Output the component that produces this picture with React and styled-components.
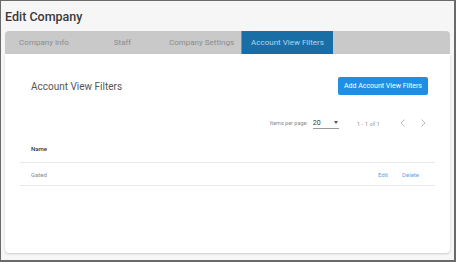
import React from "react";
import styled, { createGlobalStyle } from "styled-components";

const Global = createGlobalStyle`
  html, body { margin: 0; padding: 0; }
  body { font-family: Roboto, "Liberation Sans", sans-serif; background: #f5f5f5; }
  * { box-sizing: border-box; }
`;

const Frame = styled.div`
  width: 456px;
  height: 262px;
  border-style: solid;
  border-color: #6a6a6a;
  border-width: 1px 2px 2px 1px;
  background: #f6f6f6;
  padding: 0 4px 0 4px;
  display: flex;
  flex-direction: column;
  overflow: hidden;
`;

const Title = styled.h1`
  margin: 0;
  height: 30px;
  padding-top: 8px;
  font-size: 12.5px;
  line-height: 16px;
  font-weight: 500;
  color: #3a3a3a;
`;

const TabBar = styled.div`
  display: flex;
  height: 23px;
  background: #c9c9c9;
  border-radius: 4px 4px 0 0;
`;

const Tab = styled.div`
  width: ${(p) => p.w}px;
  display: flex;
  align-items: center;
  justify-content: center;
  font-size: 8px;
  color: ${(p) => (p.active ? "#b9d2e6" : "#8c8c8c")};
  background: ${(p) => (p.active ? "#1a6ea6" : "transparent")};
  border-left: ${(p) => (p.active ? "1px solid #5f98c2" : "none")};
`;

const Card = styled.div`
  height: 199px;
  background: #fff;
  border-radius: 0 0 4px 4px;
  box-shadow: 0 1px 2px rgba(0, 0, 0, 0.18);
  padding: 0 15px;
  display: flex;
  flex-direction: column;
`;

const Header = styled.div`
  display: flex;
  align-items: center;
  justify-content: space-between;
  padding: 23px 7px 0 11px;
`;

const Heading = styled.div`
  font-size: 10px;
  color: #555;
`;

const AddButton = styled.button`
  border: none;
  border-radius: 2px;
  background: #1e8fe6;
  color: #fff;
  font-family: inherit;
  font-size: 7px;
  height: 18px;
  width: 90px;
  padding: 0;
`;

const Pager = styled.div`
  display: flex;
  align-items: center;
  justify-content: flex-end;
  height: 20px;
  margin-top: 18px;
  padding-right: 8px;
  font-size: 5.5px;
  color: #8a8a8a;
`;

const Select = styled.div`
  display: flex;
  align-items: center;
  justify-content: space-between;
  width: 26px;
  height: 11px;
  margin-left: 5px;
  border-bottom: 1px solid #9a9a9a;
  font-size: 7px;
  color: #333;
`;

const Caret = styled.span`
  width: 0;
  height: 0;
  border-left: 2.5px solid transparent;
  border-right: 2.5px solid transparent;
  border-top: 3px solid #555;
  margin-right: 1px;
`;

const Range = styled.span`
  margin-left: 18px;
  font-size: 6px;
  color: #9a9a9a;
`;

const Nav = styled.div`
  display: flex;
  gap: 12px;
  margin-left: 19px;
  svg { display: block; }
`;

const Table = styled.div`
  margin-top: 0;
`;

const Row = styled.div`
  display: flex;
  align-items: center;
  height: ${(p) => (p.head ? 30 : 23)}px;
  padding: ${(p) => (p.head ? "2px 0 0 11px" : "0 16px 0 11px")};
  border-bottom: 1px solid #e8e8e8;
  font-size: 6px;
  color: ${(p) => (p.head ? "#333" : "#8a8a8a")};
  font-weight: ${(p) => (p.head ? 500 : 400)};
`;

const Cell = styled.div`
  flex: 1;
`;

const Link = styled.span`
  color: #5aa6e8;
  font-size: 6px;
  margin-left: 14px;
`;

const Chevron = ({ dir }) => (
  <svg width="8" height="10" viewBox="0 0 8 10">
    <path
      d={dir === "left" ? "M5.5 1.5 L2 5 L5.5 8.5" : "M2.5 1.5 L6 5 L2.5 8.5"}
      fill="none"
      stroke="#bdbdbd"
      strokeWidth="1"
    />
  </svg>
);

export default function App() {
  return (
    <>
      <Global />
      <Frame>
        <Title>Edit Company</Title>
        <TabBar>
          <Tab w={78}>Company Info</Tab>
          <Tab w={79}>Staff</Tab>
          <Tab w={79}>Company Settings</Tab>
          <Tab w={92} active>Account View Filters</Tab>
        </TabBar>
        <Card>
          <Header>
            <Heading>Account View Filters</Heading>
            <AddButton>Add Account View Filters</AddButton>
          </Header>
          <Pager>
            <span>Items per page:</span>
            <Select>
              <span>20</span>
              <Caret />
            </Select>
            <Range>1 - 1 of 1</Range>
            <Nav>
              <Chevron dir="left" />
              <Chevron dir="right" />
            </Nav>
          </Pager>
          <Table>
            <Row head>
              <Cell>Name</Cell>
            </Row>
            <Row>
              <Cell>Gated</Cell>
              <Link>Edit</Link>
              <Link>Delete</Link>
            </Row>
          </Table>
        </Card>
      </Frame>
    </>
  );
}
